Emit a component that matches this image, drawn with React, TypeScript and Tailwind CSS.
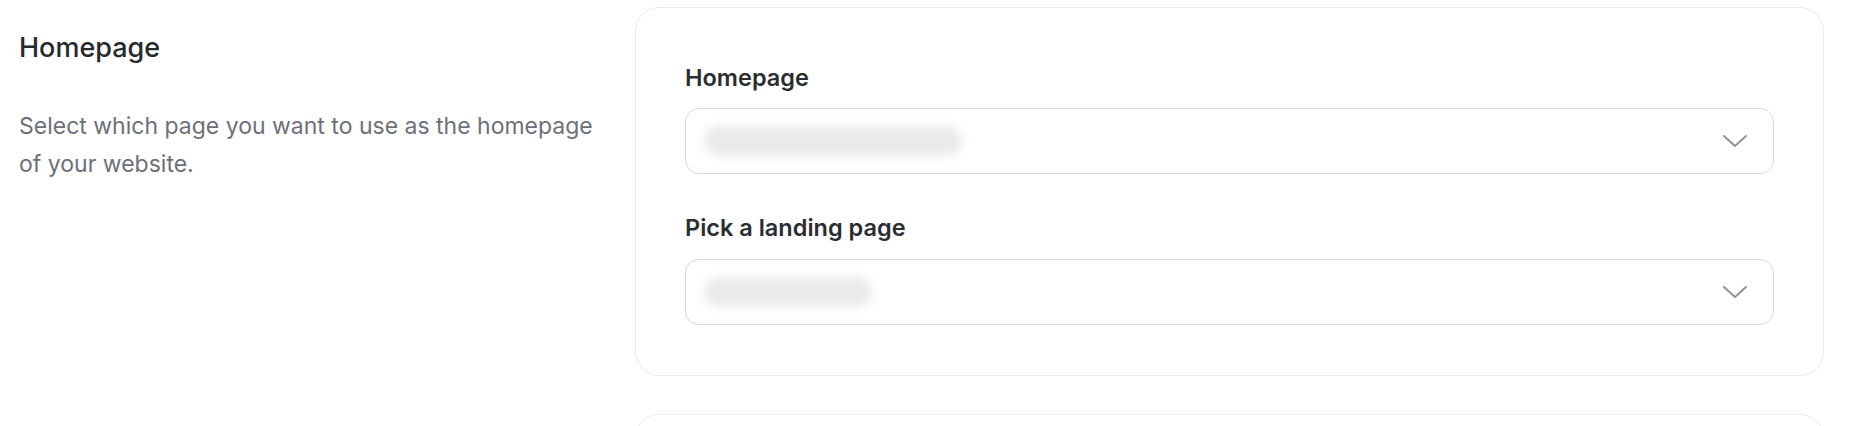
import React from 'react';

function Chevron() {
  return (
    <svg width="26" height="14" viewBox="0 0 26 14" fill="none" className="shrink-0">
      <path d="M2 2L13 12L24 2" stroke="#8e929b" strokeWidth="2" strokeLinecap="round" strokeLinejoin="round" />
    </svg>
  );
}

// blurred placeholder standing in for a redacted value
function SelectBox({ blurWidth }: { blurWidth: string }) {
  return (
    <div className="flex h-[66px] items-center justify-between rounded-[14px] border border-[#d8d9de] bg-white pl-[18px] pr-[25px]">
      <div className={`h-[30px] ${blurWidth} rounded-full bg-[#eaeaea] blur-[5px]`} />
      <Chevron />
    </div>
  );
}

export default function App() {
  return (
    <div className="flex min-h-screen bg-white font-['Inter',sans-serif]">
      <div className="w-[635px] shrink-0 pl-[19px] pr-[30px] pt-[32px]">
        <h2 className="text-[27px] font-medium leading-[32px] text-[#27292d]">Homepage</h2>
        <p className="mt-[43px] text-[23px] leading-[38px] text-[#6d7079]">
          Select which page you want to use as the homepage of your website.
        </p>
      </div>
      <div className="flex flex-1 flex-col gap-[38px] pr-[40px] pt-[7px]">
        <div className="rounded-[24px] border border-[#ebebee] px-[49px] pb-[50px] pt-[54px]">
          <label className="block text-[23.5px] font-semibold leading-[32px] text-[#2b2d31]">Homepage</label>
          <div className="mt-[14px]">
            <SelectBox blurWidth="w-[258px]" />
          </div>
          <label className="mt-[38px] block text-[23.5px] font-semibold leading-[32px] text-[#2b2d31]">
            Pick a landing page
          </label>
          <div className="mt-[15px]">
            <SelectBox blurWidth="w-[168px]" />
          </div>
        </div>
        <div className="h-[120px] rounded-[24px] border border-[#ebebee]" />
      </div>
    </div>
  );
}
